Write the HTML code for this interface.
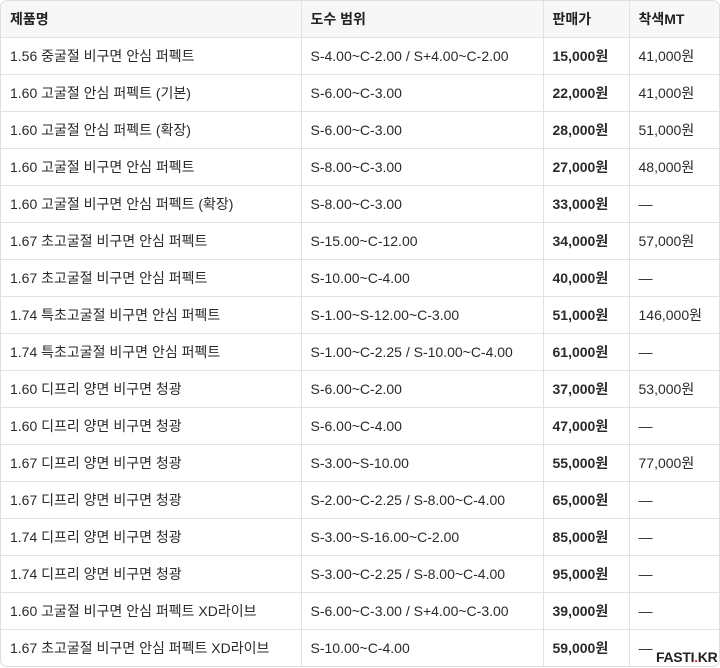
<!DOCTYPE html>
<html><head><meta charset="utf-8"><style>
body{margin:0;background:#fff;font-family:"Liberation Sans","Noto Sans CJK KR",sans-serif;}
.wrap{position:absolute;left:0;top:0;width:718px;height:665px;border:1px solid #dedede;border-radius:7px;overflow:hidden;}
table{border-collapse:collapse;width:718px;table-layout:fixed;}
td,th{height:36px;border-bottom:1px solid #e2e2e2;border-right:1px solid #e2e2e2;padding:0 0 0 9px;font-size:14px;color:#2a2a2a;text-align:left;white-space:nowrap;}
th{background:#f7f7f7;font-weight:bold;color:#222;}
td:last-child,th:last-child{border-right:none;}
tr:last-child td{border-bottom:none;}
td.b{font-weight:bold;}
.wm{position:absolute;left:656px;top:649px;font-size:14px;font-weight:bold;color:#222;letter-spacing:-0.3px;background:rgba(255,255,255,0.8)}
.wm span{color:#e33;}
</style></head><body>
<div class="wrap"><table>
<colgroup><col style="width:300px"><col style="width:242px"><col style="width:86px"><col style="width:90px"></colgroup>
<tr><th>제품명</th><th>도수 범위</th><th>판매가</th><th>착색MT</th></tr>
<tr><td>1.56 중굴절 비구면 안심 퍼펙트</td><td>S-4.00~C-2.00 / S+4.00~C-2.00</td><td class="b">15,000원</td><td>41,000원</td></tr>
<tr><td>1.60 고굴절 안심 퍼펙트 (기본)</td><td>S-6.00~C-3.00</td><td class="b">22,000원</td><td>41,000원</td></tr>
<tr><td>1.60 고굴절 안심 퍼펙트 (확장)</td><td>S-6.00~C-3.00</td><td class="b">28,000원</td><td>51,000원</td></tr>
<tr><td>1.60 고굴절 비구면 안심 퍼펙트</td><td>S-8.00~C-3.00</td><td class="b">27,000원</td><td>48,000원</td></tr>
<tr><td>1.60 고굴절 비구면 안심 퍼펙트 (확장)</td><td>S-8.00~C-3.00</td><td class="b">33,000원</td><td>—</td></tr>
<tr><td>1.67 초고굴절 비구면 안심 퍼펙트</td><td>S-15.00~C-12.00</td><td class="b">34,000원</td><td>57,000원</td></tr>
<tr><td>1.67 초고굴절 비구면 안심 퍼펙트</td><td>S-10.00~C-4.00</td><td class="b">40,000원</td><td>—</td></tr>
<tr><td>1.74 특초고굴절 비구면 안심 퍼펙트</td><td>S-1.00~S-12.00~C-3.00</td><td class="b">51,000원</td><td>146,000원</td></tr>
<tr><td>1.74 특초고굴절 비구면 안심 퍼펙트</td><td>S-1.00~C-2.25 / S-10.00~C-4.00</td><td class="b">61,000원</td><td>—</td></tr>
<tr><td>1.60 디프리 양면 비구면 청광</td><td>S-6.00~C-2.00</td><td class="b">37,000원</td><td>53,000원</td></tr>
<tr><td>1.60 디프리 양면 비구면 청광</td><td>S-6.00~C-4.00</td><td class="b">47,000원</td><td>—</td></tr>
<tr><td>1.67 디프리 양면 비구면 청광</td><td>S-3.00~S-10.00</td><td class="b">55,000원</td><td>77,000원</td></tr>
<tr><td>1.67 디프리 양면 비구면 청광</td><td>S-2.00~C-2.25 / S-8.00~C-4.00</td><td class="b">65,000원</td><td>—</td></tr>
<tr><td>1.74 디프리 양면 비구면 청광</td><td>S-3.00~S-16.00~C-2.00</td><td class="b">85,000원</td><td>—</td></tr>
<tr><td>1.74 디프리 양면 비구면 청광</td><td>S-3.00~C-2.25 / S-8.00~C-4.00</td><td class="b">95,000원</td><td>—</td></tr>
<tr><td>1.60 고굴절 비구면 안심 퍼펙트 XD라이브</td><td>S-6.00~C-3.00 / S+4.00~C-3.00</td><td class="b">39,000원</td><td>—</td></tr>
<tr><td>1.67 초고굴절 비구면 안심 퍼펙트 XD라이브</td><td>S-10.00~C-4.00</td><td class="b">59,000원</td><td>—</td></tr>
</table></div>
<div class="wm">FASTI<span>.</span>KR</div>
</body></html>
